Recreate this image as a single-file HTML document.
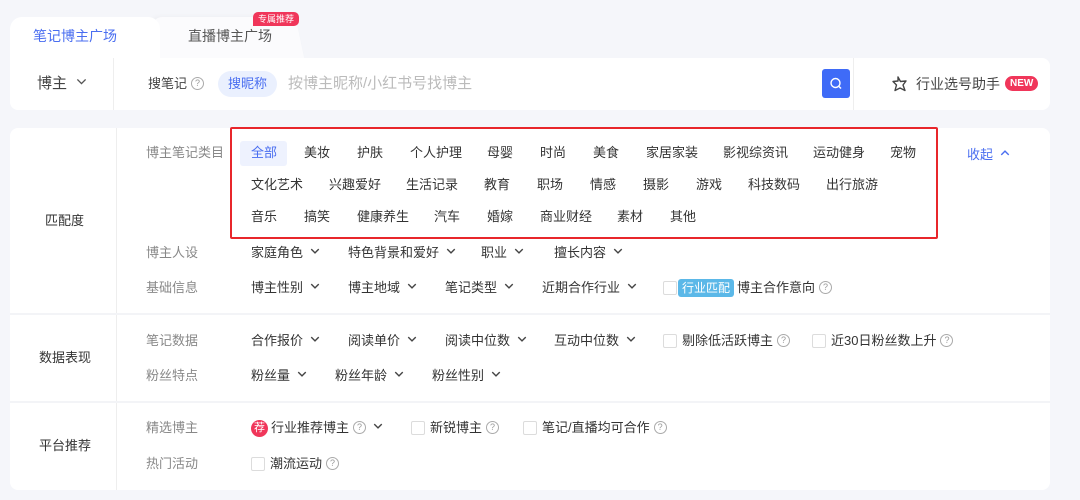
<!DOCTYPE html>
<html><head><meta charset="utf-8"><style>
*{margin:0;padding:0;box-sizing:border-box}
body{width:1080px;height:500px;background:#f5f6fa;position:relative;overflow:hidden;font-family:"Liberation Sans","Noto Sans CJK SC",sans-serif;font-size:13px;color:#333}
.a{position:absolute;white-space:nowrap;line-height:20px}
.g{color:#888}
.card{position:absolute;background:#fff}
.chev{display:inline-block;width:10px;height:10px;margin-left:7px;vertical-align:1px}
.q{display:inline-block;width:13px;height:13px;border:1px solid #aaa;border-radius:50%;font-size:9px;line-height:11px;text-align:center;color:#999;margin-left:4px;vertical-align:2px}
.cb{position:absolute;width:14px;height:14px;border:1px solid #dcdcdc;border-radius:2px;background:#fff}
</style></head><body>
<div class="card" style="left:160px;top:17px;width:145px;height:45px;background:#fbfbfd;border-radius:12px 12px 0 0;transform:skewX(12deg);transform-origin:bottom left;box-shadow:-3px 0 6px rgba(0,0,0,0.04)"></div>
<div class="card" style="left:10px;top:17px;width:150px;height:45px;border-radius:12px 12px 0 0"></div>
<div class="a" style="left:33px;top:26px;font-size:14px;color:#4a6ef0">笔记博主广场</div>
<div class="a" style="left:188px;top:26px;font-size:14px;color:#555">直播博主广场</div>
<div class="a" style="left:253px;top:12px;height:14px;line-height:14px;font-size:9px;color:#fff;background:#f0365a;padding:0 5px;border-radius:5px 5px 5px 0">专属推荐</div>
<div class="card" style="left:10px;top:58px;width:1040px;height:52px;border-radius:0 8px 8px 8px"></div>
<div style="position:absolute;left:113px;top:58px;width:1px;height:52px;background:#eee"></div>
<div style="position:absolute;left:853px;top:58px;width:1px;height:52px;background:#eee"></div>
<div class="a" style="left:37px;top:74px;font-size:15px;color:#444">博主<svg class="chev" style="margin-left:9px;width:11px;height:11px" viewBox="0 0 8 8"><path d="M1 2.5L4 5.5 7 2.5" fill="none" stroke="#555" stroke-width="1"/></svg></div>
<div class="a" style="left:148px;top:74px;color:#444">搜笔记<span class="q">?</span></div>
<div class="a" style="left:218px;top:71px;height:26px;line-height:26px;padding:0 10px;background:#eaf0fe;color:#4a6ef0;border-radius:13px">搜昵称</div>
<div class="a" style="left:288px;top:74px;font-size:15px;color:#bbb">按博主昵称/小红书号找博主</div>
<div style="position:absolute;left:822px;top:69px;width:28px;height:29px;background:#3f6bf7;border-radius:3px"><svg width="28" height="29" viewBox="0 0 28 29"><circle cx="13.5" cy="14" r="4.5" fill="none" stroke="#fff" stroke-width="1.4"/><path d="M17 17.5L19 19.5" stroke="#fff" stroke-width="1.4"/></svg></div>
<svg style="position:absolute;left:891px;top:75px" width="18" height="18" viewBox="0 0 18 18"><path d="M7 2L9.5 6.5 15 6 12 10 14 15.5 9 13 4 15.5 5.5 10 2 6.5 7 6Z" fill="none" stroke="#444" stroke-width="1.4" stroke-linejoin="round"/></svg>
<div class="a" style="left:916px;top:74px;font-size:14px;color:#444">行业选号助手</div>
<div class="a" style="left:1005px;top:76px;height:15px;line-height:15px;font-size:10px;font-weight:bold;color:#fff;background:#f0365a;padding:0 5px;border-radius:8px">NEW</div>
<div class="card" style="left:10px;top:128px;width:1040px;height:362px;border-radius:8px"></div>
<div style="position:absolute;left:116px;top:128px;width:1px;height:362px;background:#eee"></div>
<div style="position:absolute;left:10px;top:313px;width:1040px;height:2px;background:#f3f4f7"></div>
<div style="position:absolute;left:10px;top:401px;width:1040px;height:2px;background:#f3f4f7"></div>
<div class="a" style="left:45px;top:211px">匹配度</div>
<div class="a" style="left:39px;top:348px">数据表现</div>
<div class="a" style="left:39px;top:436px">平台推荐</div>
<div class="a g" style="left:146px;top:143px">博主笔记类目</div>
<div class="a g" style="left:146px;top:243px">博主人设</div>
<div class="a g" style="left:146px;top:278px">基础信息</div>
<div class="a g" style="left:146px;top:331px">笔记数据</div>
<div class="a g" style="left:146px;top:366px">粉丝特点</div>
<div class="a g" style="left:146px;top:418px">精选博主</div>
<div class="a g" style="left:146px;top:454px">热门活动</div>
<div style="position:absolute;left:240px;top:141px;width:47px;height:25px;background:#eef2fe;border-radius:3px"></div>
<div class="a" style="left:251px;top:143px;color:#4a6ef0">全部</div>
<div class="a" style="left:304px;top:143px">美妆</div>
<div class="a" style="left:357px;top:143px">护肤</div>
<div class="a" style="left:410px;top:143px">个人护理</div>
<div class="a" style="left:487px;top:143px">母婴</div>
<div class="a" style="left:540px;top:143px">时尚</div>
<div class="a" style="left:593px;top:143px">美食</div>
<div class="a" style="left:646px;top:143px">家居家装</div>
<div class="a" style="left:723px;top:143px">影视综资讯</div>
<div class="a" style="left:813px;top:143px">运动健身</div>
<div class="a" style="left:890px;top:143px">宠物</div>
<div class="a" style="left:967px;top:145px;color:#4a6ef0">收起<svg class="chev" viewBox="0 0 8 8"><path d="M1 5.5L4 2.5 7 5.5" fill="none" stroke="#4a6ef0" stroke-width="1.1"/></svg></div>
<div class="a" style="left:251px;top:175px">文化艺术</div>
<div class="a" style="left:329px;top:175px">兴趣爱好</div>
<div class="a" style="left:406px;top:175px">生活记录</div>
<div class="a" style="left:484px;top:175px">教育</div>
<div class="a" style="left:537px;top:175px">职场</div>
<div class="a" style="left:590px;top:175px">情感</div>
<div class="a" style="left:643px;top:175px">摄影</div>
<div class="a" style="left:696px;top:175px">游戏</div>
<div class="a" style="left:748px;top:175px">科技数码</div>
<div class="a" style="left:826px;top:175px">出行旅游</div>
<div class="a" style="left:251px;top:207px">音乐</div>
<div class="a" style="left:304px;top:207px">搞笑</div>
<div class="a" style="left:357px;top:207px">健康养生</div>
<div class="a" style="left:434px;top:207px">汽车</div>
<div class="a" style="left:487px;top:207px">婚嫁</div>
<div class="a" style="left:540px;top:207px">商业财经</div>
<div class="a" style="left:617px;top:207px">素材</div>
<div class="a" style="left:670px;top:207px">其他</div>
<div style="position:absolute;left:230px;top:127px;width:708px;height:112px;border:2px solid #e8262b;border-radius:2px"></div>
<svg width="0" height="0" style="position:absolute"><defs><symbol id="cv" viewBox="0 0 8 8"><path d="M1 2.5L4 5.5 7 2.5" fill="none" stroke="#444" stroke-width="1.1"/></symbol></defs></svg>
<div class="a" style="left:251px;top:243px">家庭角色<svg class="chev"><use href="#cv"/></svg></div>
<div class="a" style="left:348px;top:243px">特色背景和爱好<svg class="chev"><use href="#cv"/></svg></div>
<div class="a" style="left:481px;top:243px">职业<svg class="chev"><use href="#cv"/></svg></div>
<div class="a" style="left:554px;top:243px">擅长内容<svg class="chev"><use href="#cv"/></svg></div>
<div class="a" style="left:251px;top:278px">博主性别<svg class="chev"><use href="#cv"/></svg></div>
<div class="a" style="left:348px;top:278px">博主地域<svg class="chev"><use href="#cv"/></svg></div>
<div class="a" style="left:445px;top:278px">笔记类型<svg class="chev"><use href="#cv"/></svg></div>
<div class="a" style="left:542px;top:278px">近期合作行业<svg class="chev"><use href="#cv"/></svg></div>
<div class="cb" style="left:663px;top:281px"></div>
<div class="a" style="left:678px;top:279px;height:18px;line-height:18px;font-size:12px;color:#fff;background:#5bb8e8;padding:0 4px;border-radius:3px">行业匹配</div>
<div class="a" style="left:737px;top:278px">博主合作意向<span class="q">?</span></div>
<div class="a" style="left:251px;top:331px">合作报价<svg class="chev"><use href="#cv"/></svg></div>
<div class="a" style="left:348px;top:331px">阅读单价<svg class="chev"><use href="#cv"/></svg></div>
<div class="a" style="left:445px;top:331px">阅读中位数<svg class="chev"><use href="#cv"/></svg></div>
<div class="a" style="left:554px;top:331px">互动中位数<svg class="chev"><use href="#cv"/></svg></div>
<div class="cb" style="left:663px;top:334px"></div>
<div class="a" style="left:682px;top:331px">剔除低活跃博主<span class="q">?</span></div>
<div class="cb" style="left:812px;top:334px"></div>
<div class="a" style="left:831px;top:331px">近30日粉丝数上升<span class="q">?</span></div>
<div class="a" style="left:251px;top:366px">粉丝量<svg class="chev"><use href="#cv"/></svg></div>
<div class="a" style="left:335px;top:366px">粉丝年龄<svg class="chev"><use href="#cv"/></svg></div>
<div class="a" style="left:432px;top:366px">粉丝性别<svg class="chev"><use href="#cv"/></svg></div>
<div class="a" style="left:251px;top:420px;width:17px;height:17px;line-height:17px;border-radius:50%;background:#f0365a;color:#fff;font-size:11px;text-align:center">荐</div>
<div class="a" style="left:271px;top:418px">行业推荐博主<span class="q">?</span><svg class="chev"><use href="#cv"/></svg></div>
<div class="cb" style="left:411px;top:421px"></div>
<div class="a" style="left:430px;top:418px">新锐博主<span class="q">?</span></div>
<div class="cb" style="left:523px;top:421px"></div>
<div class="a" style="left:542px;top:418px">笔记/直播均可合作<span class="q">?</span></div>
<div class="cb" style="left:251px;top:457px"></div>
<div class="a" style="left:270px;top:454px">潮流运动<span class="q">?</span></div>
</body></html>
